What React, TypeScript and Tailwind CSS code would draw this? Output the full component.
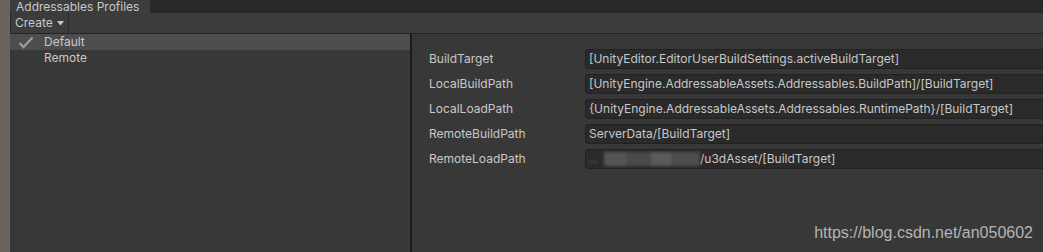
import React from "react";

const rows = [
  { label: "BuildTarget", value: "[UnityEditor.EditorUserBuildSettings.activeBuildTarget]" },
  { label: "LocalBuildPath", value: "[UnityEngine.AddressableAssets.Addressables.BuildPath]/[BuildTarget]" },
  { label: "LocalLoadPath", value: "{UnityEngine.AddressableAssets.Addressables.RuntimePath}/[BuildTarget]" },
  { label: "RemoteBuildPath", value: "ServerData/[BuildTarget]" },
];

function Check() {
  return (
    <svg width="16" height="13" viewBox="0 0 16 13" className="ml-[8px] mr-[10px]">
      <path d="M1.5 7 L5.5 11 L14.5 1.5" fill="none" stroke="#9a9a9a" strokeWidth="2.4" />
    </svg>
  );
}

export default function App() {
  return (
    <div
      className="flex h-[252px] w-[1043px] overflow-hidden text-[12px] text-[#c8c8c8]"
      style={{ fontFamily: "Inter, 'Noto Sans', sans-serif" }}
    >
      {/* scene behind the window */}
      <div className="w-[10px] shrink-0 bg-[#6a645d]" />

      <div className="flex flex-1 flex-col bg-[#383838]">
        {/* Tab strip */}
        <div className="flex h-[13px] bg-[#282828]">
          <div className="flex w-[140px] items-end bg-[#3c3c3c] pl-[6px] leading-[13px]">
            <span className="-mt-[2px] block leading-[12px]">Addressables Profiles</span>
          </div>
        </div>

        {/* Toolbar */}
        <div className="flex h-[21px] border-b border-[#232323] bg-[#3c3c3c]">
          <div className="flex items-center gap-[4px] border-x border-[#2a2a2a] pl-[4px] pr-[4px]">
            <span>Create</span>
            <svg width="7" height="5" viewBox="0 0 7 5">
              <path d="M0 0 H7 L3.5 4.5 Z" fill="#c8c8c8" />
            </svg>
          </div>
        </div>

        <div className="flex flex-1">
          {/* Profiles list */}
          <div className="w-[400px] shrink-0">
            <div className="flex h-[16px] items-center bg-[#4d4d4d]">
              <Check />
              <span>Default</span>
            </div>
            <div className="flex h-[16px] items-center pl-[34px]">Remote</div>
          </div>

          {/* Separator */}
          <div className="w-[2px] bg-[#1c1c1c]" />

          {/* Variables */}
          <div className="relative flex flex-1 flex-col gap-[5px] pl-[17px] pt-[15px]">
            {rows.map((r) => (
              <div key={r.label} className="flex h-[20px] items-center">
                <span className="w-[156px] shrink-0">{r.label}</span>
                <div className="-mr-[6px] flex h-[20px] flex-1 items-center rounded-[3px] border border-[#212121] bg-[#2a2a2a] pl-[3px]">
                  {r.value}
                </div>
              </div>
            ))}
            <div className="flex h-[20px] items-center">
              <span className="w-[156px] shrink-0">RemoteLoadPath</span>
              <div className="-mr-[6px] flex h-[20px] flex-1 items-center overflow-hidden rounded-[3px] border border-[#212121] bg-[#2a2a2a]">
                <div className="flex h-full w-[114px] shrink-0 items-center blur-[1.5px]">
                  <span className="pl-[2px] text-[#8a8a8a]">…</span>
                  <div className="ml-[6px] h-[14px] w-[22px] bg-[#555]" />
                  <div className="h-[14px] w-[26px] bg-[#4a4a4a]" />
                  <div className="h-[14px] w-[20px] bg-[#5a5a5a]" />
                  <div className="h-[14px] w-[30px] bg-[#4e4e4e]" />
                </div>
                <span>/u3dAsset/[BuildTarget]</span>
              </div>
            </div>

            {/* watermark */}
            <div
              className="absolute bottom-[7px] right-[10px] text-[16px] text-[#b4b4b4]"
              style={{ fontFamily: "'Liberation Sans', Arial, sans-serif" }}
            >
              https://blog.csdn.net/an050602
            </div>
          </div>
        </div>
      </div>
    </div>
  );
}
